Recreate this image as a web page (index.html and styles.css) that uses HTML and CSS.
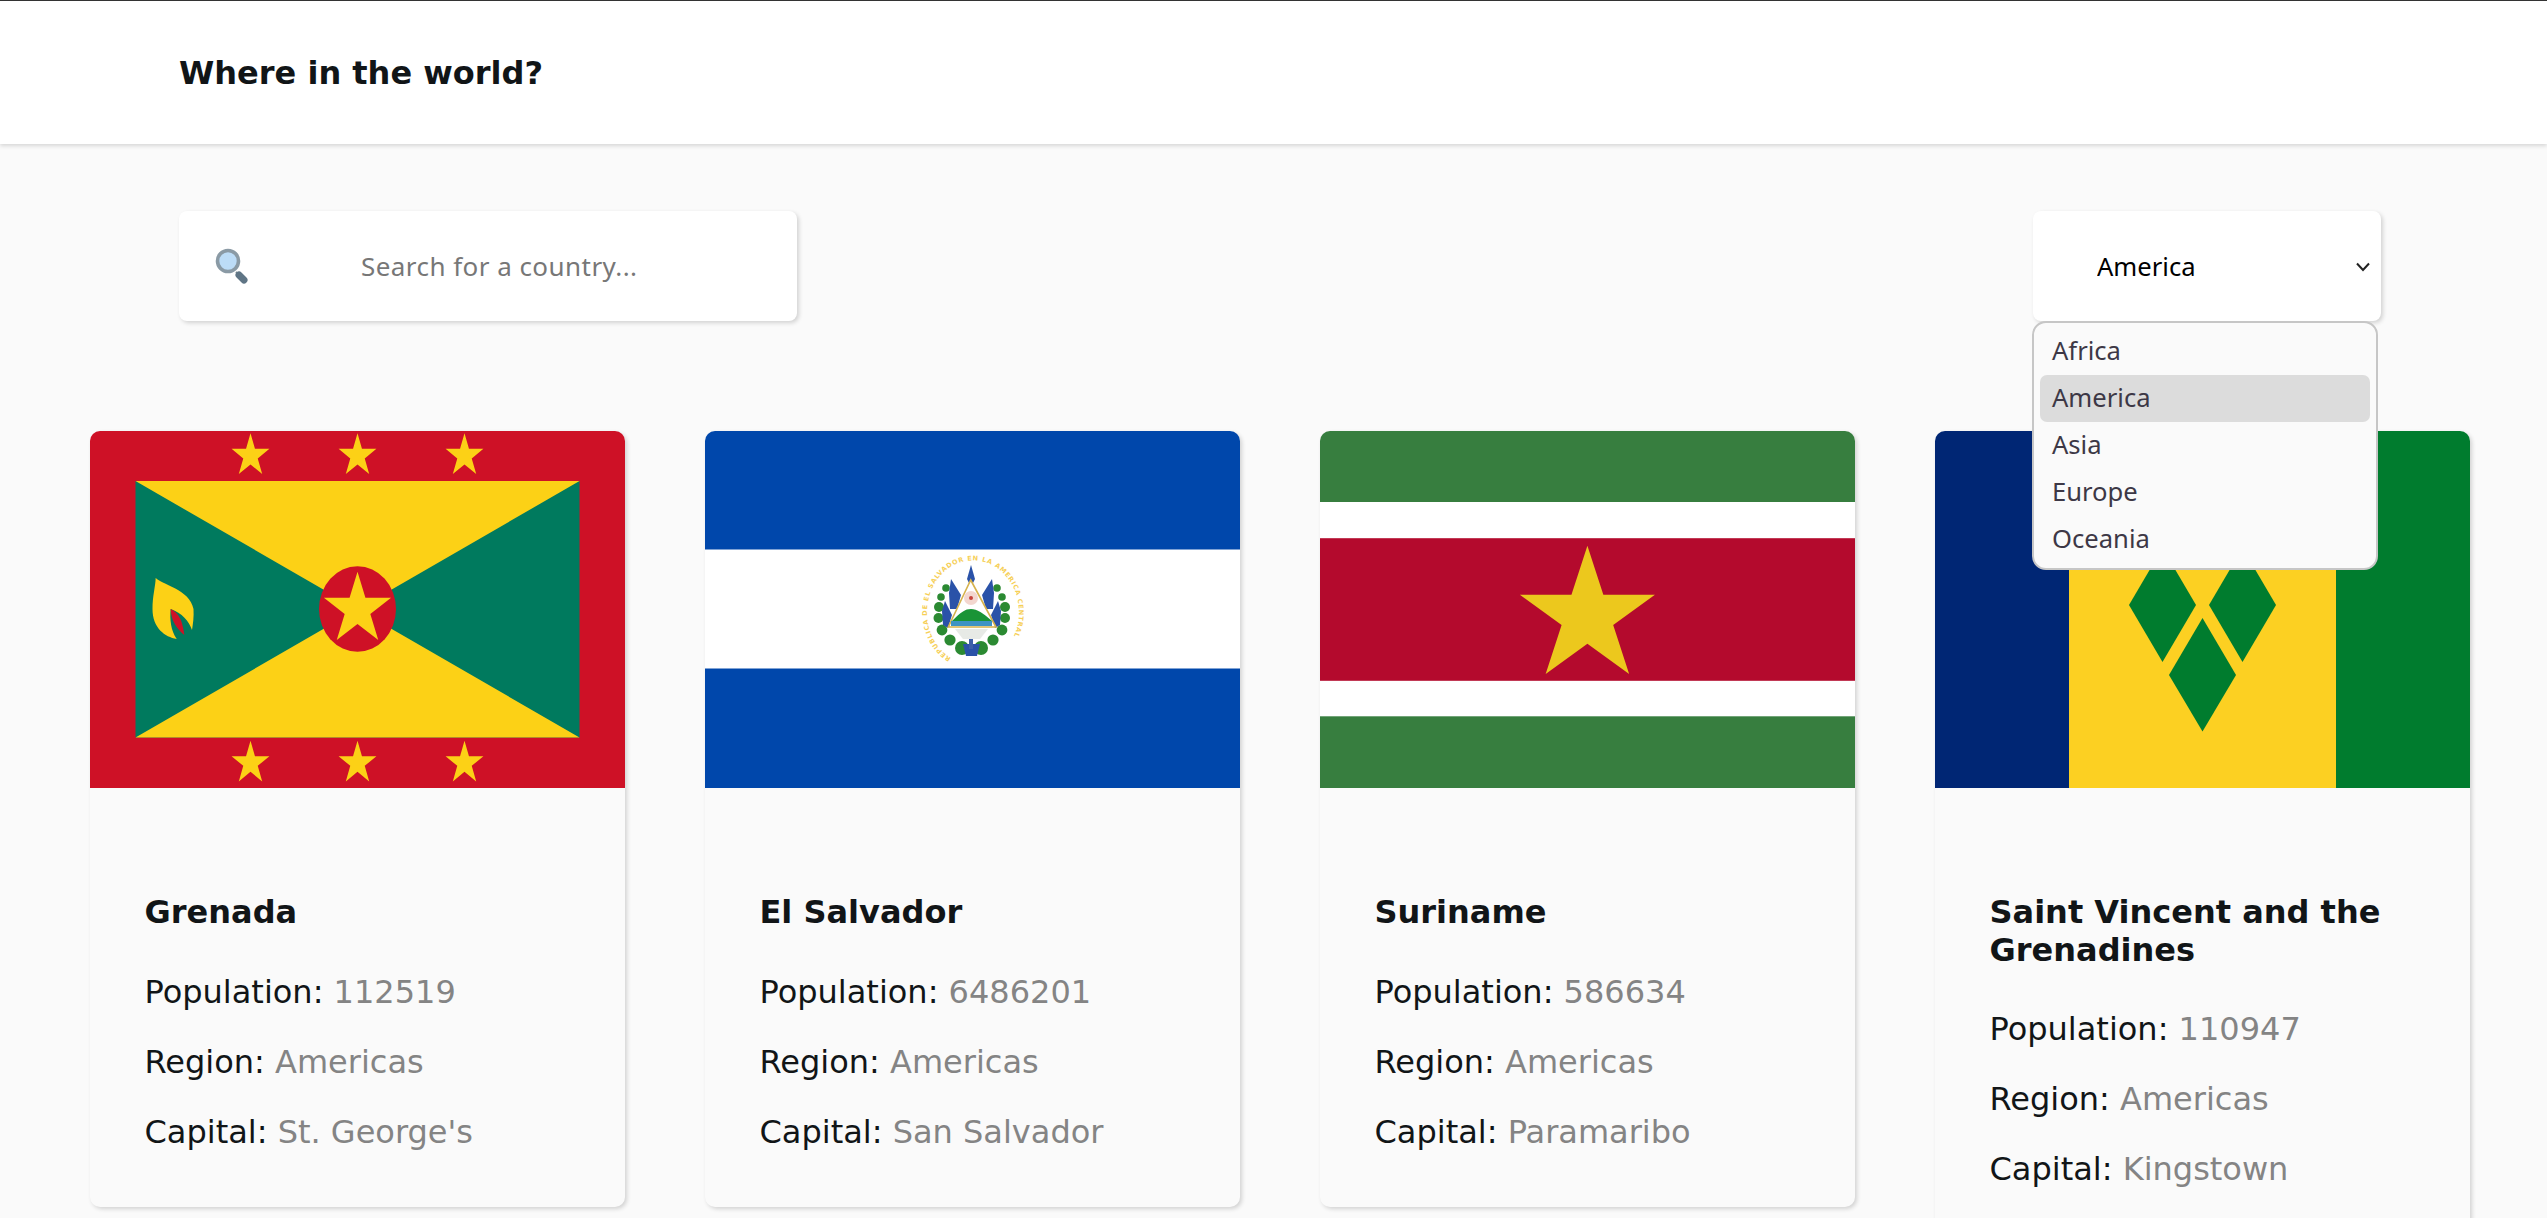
FILE: index.html
```html
<!DOCTYPE html>
<html lang="en">
<head>
<meta charset="utf-8">
<title>Where in the world?</title>
<link rel="stylesheet" href="styles.css">
</head>
<body>
<header class="topbar"><h1 class="brand">Where in the world?</h1></header>
<main class="page">
  <section class="controls">
    <label class="search">
      <svg class="search-icon" viewBox="0 0 34 36" aria-hidden="true">
        <line x1="22" y1="24" x2="24" y2="26" stroke="#77868f" stroke-width="2"/>
        <line x1="25" y1="27" x2="30" y2="32" stroke="#5f7585" stroke-width="7" stroke-linecap="round"/>
        <circle cx="14" cy="13" r="10.5" fill="#bcdcf7" stroke="#8a9aa5" stroke-width="3.6"/>
      </svg>
      <input class="search-input" type="text" placeholder="Search for a country...">
    </label>
    <div class="filter">
      <select class="filter-select">
        <option>Africa</option>
        <option selected>America</option>
        <option>Asia</option>
        <option>Europe</option>
        <option>Oceania</option>
      </select>
      <svg class="filter-chevron" viewBox="0 0 14 10" aria-hidden="true">
        <path d="M1 1.5L7 8L13 1.5" fill="none" stroke="#222" stroke-width="2"/>
      </svg>
      <ul class="filter-menu">
        <li class="filter-item">Africa</li>
        <li class="filter-item is-active">America</li>
        <li class="filter-item">Asia</li>
        <li class="filter-item">Europe</li>
        <li class="filter-item">Oceania</li>
      </ul>
    </div>
  </section>
  <section class="grid">
    <article class="card">
      <svg class="flag" viewBox="0 0 535 357" preserveAspectRatio="none" aria-label="Flag of Grenada">
        <defs>
          <polygon id="star" points="0,-1 0.2245,-0.309 0.951,-0.309 0.3633,0.118 0.5878,0.809 0,0.382 -0.5878,0.809 -0.3633,0.118 -0.951,-0.309 -0.2245,-0.309"/>
        </defs>
        <rect width="535" height="357" fill="#ce1126"/>
        <rect x="45.5" y="50" width="444" height="256.5" fill="#007a5e"/>
        <polygon points="45.5,50 489.5,50 45.5,306.5 489.5,306.5" fill="#fcd116"/>
        <ellipse cx="267.5" cy="178" rx="38.5" ry="42.7" fill="#ce1126"/>
        <g fill="#fcd116">
          <use href="#star" transform="translate(267.5 178.5) scale(35.3 37.8)"/>
          <use href="#star" transform="translate(160.5 24.8) scale(19.9 22.5)"/>
          <use href="#star" transform="translate(267.5 24.8) scale(19.9 22.5)"/>
          <use href="#star" transform="translate(374.5 24.8) scale(19.9 22.5)"/>
          <use href="#star" transform="translate(160.5 332.2) scale(19.9 22.5)"/>
          <use href="#star" transform="translate(267.5 332.2) scale(19.9 22.5)"/>
          <use href="#star" transform="translate(374.5 332.2) scale(19.9 22.5)"/>
          <path d="M65.7 146.7C70 153 100 158 103.5 178C104 186 103 193 102 199C99 190 92 182 80.7 178C79.5 188 81 200 86.7 208C75 206 62.5 197 62.5 178C62.5 165 65.5 155 65.7 146.7Z"/>
        </g>
        <path d="M80.7 178C88 182 92 187 94.3 204C87 198 81 190 80.7 178Z" fill="#ce1126"/>
      </svg>
      <div class="card-body">
        <h2 class="card-name">Grenada</h2>
        <p class="stat">Population: <span class="stat-value">112519</span></p>
        <p class="stat">Region: <span class="stat-value">Americas</span></p>
        <p class="stat">Capital: <span class="stat-value">St. George's</span></p>
      </div>
    </article>
    <article class="card">
      <svg class="flag" viewBox="0 0 535 357" preserveAspectRatio="none" aria-label="Flag of El Salvador">
        <rect width="535" height="357" fill="#0047ab"/>
        <rect y="118.5" width="535" height="119" fill="#fff"/>
        <path id="sv-ring" d="M246 227A46 52 0 1 1 290 227" fill="none"/>
        <text class="emblem-text"><textPath href="#sv-ring" textLength="232" lengthAdjust="spacing">REPUBLICA DE EL SALVADOR EN LA AMERICA CENTRAL</textPath></text>
        <g fill="#2b8a32">
          <circle cx="241" cy="157" r="3.8"/><circle cx="236" cy="166" r="3.8"/><circle cx="234" cy="176" r="5"/><circle cx="233.5" cy="187" r="5"/><circle cx="237" cy="199" r="5.4"/><circle cx="245" cy="209" r="5.6"/><circle cx="257" cy="217" r="7"/><circle cx="276" cy="217" r="7"/><circle cx="288" cy="209" r="5.6"/><circle cx="297" cy="199" r="5.4"/><circle cx="300" cy="187" r="5"/><circle cx="300" cy="176" r="5"/><circle cx="297" cy="166" r="3.8"/><circle cx="292" cy="157" r="3.8"/>
        </g>
        <g fill="#2a52a8">
          <polygon points="246,148 256,164 252,178 245,178 244,162"/>
          <polygon points="287,148 277,164 281,178 288,178 289,162"/>
          <polygon points="240,170 247,184 243,197 238,194 237,180"/>
          <polygon points="293,170 286,184 290,197 295,194 296,180"/>
          <polygon points="266,134 270,148 266,156 262,148"/>
          <polygon points="258,213 275,213 272,225 261,225"/>
        </g>
        <polygon points="265.7,149 291,196 243.3,196" fill="#fff" stroke="#d6b24c" stroke-width="1.6"/>
        <circle cx="266" cy="167" r="7" fill="#f3d6cf"/>
        <circle cx="266" cy="167" r="2" fill="#c7433b"/>
        <path d="M247 190C256 181 260 178 266 178C272 178 278 182 287 190Z" fill="#1a9436"/>
        <rect x="246" y="190" width="41" height="5" fill="#3e93c4"/>
        <path d="M250 198H283L275 208H258Z" fill="#e7eae6"/>
        <rect x="264" y="208" width="4" height="10" fill="#3d5fa8"/>
      </svg>
      <div class="card-body">
        <h2 class="card-name">El Salvador</h2>
        <p class="stat">Population: <span class="stat-value">6486201</span></p>
        <p class="stat">Region: <span class="stat-value">Americas</span></p>
        <p class="stat">Capital: <span class="stat-value">San Salvador</span></p>
      </div>
    </article>
    <article class="card">
      <svg class="flag" viewBox="0 0 535 357" preserveAspectRatio="none" aria-label="Flag of Suriname">
        <rect width="535" height="357" fill="#377e3f"/>
        <rect y="71" width="535" height="214.3" fill="#fff"/>
        <rect y="107.2" width="535" height="142.6" fill="#b40a2d"/>
        <use href="#star" fill="#ecc81d" transform="translate(267.4 185.6) scale(71 70.9)"/>
      </svg>
      <div class="card-body">
        <h2 class="card-name">Suriname</h2>
        <p class="stat">Population: <span class="stat-value">586634</span></p>
        <p class="stat">Region: <span class="stat-value">Americas</span></p>
        <p class="stat">Capital: <span class="stat-value">Paramaribo</span></p>
      </div>
    </article>
    <article class="card">
      <svg class="flag" viewBox="0 0 535 357" preserveAspectRatio="none" aria-label="Flag of Saint Vincent and the Grenadines">
        <rect width="134" height="357" fill="#002674"/>
        <rect x="134" width="267" height="357" fill="#fcd022"/>
        <rect x="401" width="134" height="357" fill="#007c2e"/>
        <g fill="#007c2e">
          <polygon points="227.5,117 261,174 227.5,231 194,174"/>
          <polygon points="307.5,117 341,174 307.5,231 274,174"/>
          <polygon points="267.5,187 301,244 267.5,300.5 234,244"/>
        </g>
      </svg>
      <div class="card-body">
        <h2 class="card-name">Saint Vincent and the Grenadines</h2>
        <p class="stat">Population: <span class="stat-value">110947</span></p>
        <p class="stat">Region: <span class="stat-value">Americas</span></p>
        <p class="stat">Capital: <span class="stat-value">Kingstown</span></p>
      </div>
    </article>
  </section>
</main>
</body>
</html>
```
FILE: styles.css
```css
* { box-sizing: border-box; }
html, body { height: 100%; margin: 0; overflow: hidden; }
body {
  background: #fafafa;
  color: #111517;
  font-family: "DejaVu Sans", sans-serif;
}
.topbar {
  height: 144px;
  display: flex;
  align-items: center;
  padding: 0 179px;
  background: #fff;
  border-top: 1px solid #333;
  box-shadow: 0 2px 4px rgba(0,0,0,.14);
}
.brand { margin: 0; font-size: 32px; font-weight: 700; }
.controls {
  display: flex;
  justify-content: space-between;
  padding: 67px 166px 0 179px;
}
.search {
  width: 618px;
  height: 110px;
  display: flex;
  align-items: center;
  gap: 111px;
  padding-left: 35px;
  background: #fff;
  border-radius: 8px;
  box-shadow: 2px 2px 4px rgba(0,0,0,.16);
}
.search-icon { width: 34px; height: 36px; flex: none; }
.search-input {
  flex: 1;
  min-width: 0;
  border: 0;
  outline: 0;
  padding: 0 2px;
  background: transparent;
  font-family: "Noto Sans", sans-serif;
  font-size: 26px;
  letter-spacing: .45px;
}
.search-input::placeholder { color: #777; opacity: 1; }
.filter { position: relative; width: 348px; height: 110px; }
.filter-select {
  width: 100%;
  height: 100%;
  border: 0;
  padding-left: 64px;
  appearance: none;
  background: #fff;
  color: #000;
  border-radius: 8px;
  font-family: "Noto Sans", sans-serif;
  font-size: 25.6px;
  box-shadow: 2px 2px 4px rgba(0,0,0,.16);
}
.filter-chevron {
  position: absolute;
  top: 51px;
  left: 323px;
  width: 14px;
  height: 10px;
  pointer-events: none;
}
.filter-menu {
  position: absolute;
  z-index: 5;
  top: 110px;
  left: -1px;
  width: 346px;
  height: 249px;
  margin: 0;
  padding: 5px 6px;
  list-style: none;
  background: #fafafa;
  border: 2px solid #c6c6c6;
  border-radius: 14px;
  color: #3d3846;
  font-family: "Noto Sans", sans-serif;
  font-size: 25.6px;
}
.filter-item {
  height: 47px;
  line-height: 46px;
  padding-left: 12px;
  border-radius: 7px;
}
.filter-item.is-active { background: #dcdcdc; }
.grid {
  display: grid;
  grid-template-columns: repeat(4, 535px);
  gap: 80px;
  align-items: start;
  padding: 110px 0 0 90px;
}
.card {
  border-radius: 10px;
  background: #fafafa;
  box-shadow: 2px 2px 4px rgba(0,0,0,.16);
}
.flag { display: block; width: 535px; height: 357px; border-radius: 10px 10px 0 0; }
.card-body { padding: 106px 55px 40px 54.5px; }
.card-name { margin: 0 0 25px; font-size: 32px; line-height: 37.5px; font-weight: 700; }
.stat { margin: 0; font-size: 32px; line-height: 70px; }
.stat-value { color: #848484; }
.emblem-text { font: 700 6.5px "DejaVu Sans", sans-serif; fill: #f6cf57; }
```
